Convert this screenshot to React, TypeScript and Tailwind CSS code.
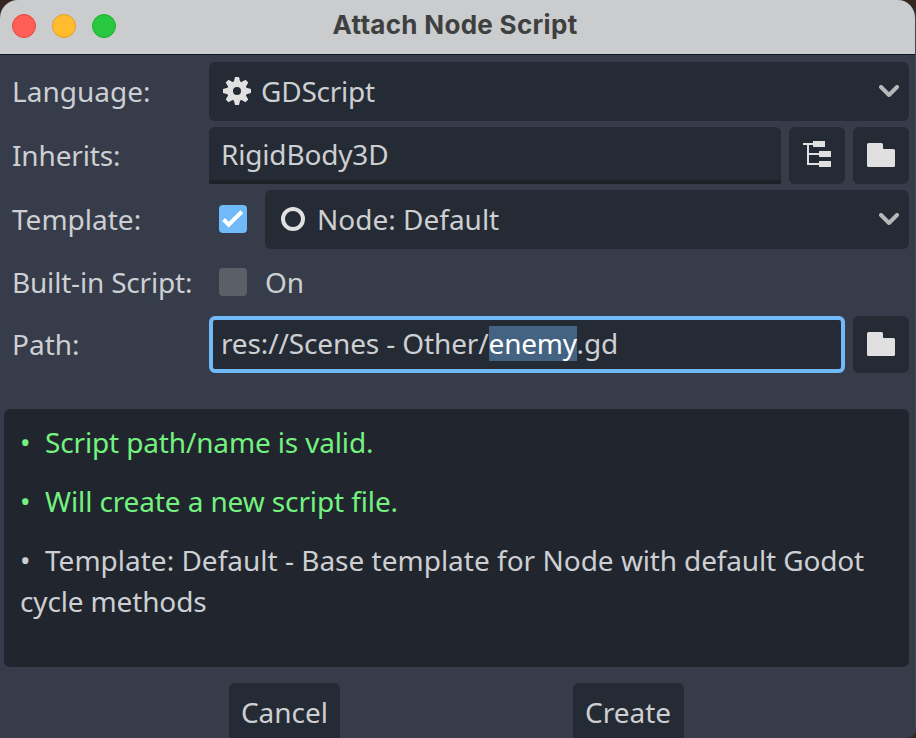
import type { ReactNode } from "react";

const Gear = () => (
  <svg className="size-8 shrink-0" viewBox="0 0 16 16" fill="#e0e0e0">
    <path
      fillRule="evenodd"
      d="M7 1l-.564 2.258a5 5 0 0 0-.689.28L3.758 2.344 2.344 3.758l1.195 1.994a5 5 0 0 0-.285.685L1 7v2l2.258.564a5 5 0 0 0 .279.688l-1.193 1.99 1.414 1.414 1.994-1.195a5 5 0 0 0 .685.285L7 15h2l.564-2.258a5 5 0 0 0 .688-.28l1.99 1.194 1.414-1.414-1.195-1.994a5 5 0 0 0 .285-.685L15 9V7l-2.258-.564a5 5 0 0 0-.28-.688l1.194-1.99-1.414-1.414-1.994 1.195a5 5 0 0 0-.686-.285L9 1zm1 5a2 2 0 0 1 0 4 2 2 0 0 1 0-4z"
    />
  </svg>
);

const Ring = () => (
  <svg className="size-8 shrink-0" viewBox="0 0 32 32" fill="none">
    <circle cx="16" cy="16" r="10" stroke="#e0e0e0" strokeWidth="4" />
  </svg>
);

const Arrow = () => (
  <svg className="ml-auto h-3 w-5 shrink-0" viewBox="0 0 20 12" fill="none">
    <path d="M2 2l8 8 8-8" stroke="#b6b8ba" strokeWidth="4" strokeLinecap="round" strokeLinejoin="round" />
  </svg>
);

const Tree = () => (
  <svg className="size-8" viewBox="0 0 32 32" fill="#e0e0e0" shapeRendering="crispEdges">
    <path d="M2 4h10V2h12v6H12V6H8v8h10v-2h12v6H18v-2H8v8h10v-2h12v6H18v-2H6V6H2z" />
  </svg>
);

const Folder = () => (
  <svg className="size-8" viewBox="0 0 32 32" fill="#e0e0e0">
    <path d="M3.5 4A1.5 1.5 0 0 0 2 5.500v21A1.5 1.5 0 0 0 3.500 28h25a1.500 1.500 0 0 0 1.500-1.500v-15A1.500 1.500 0 0 0 28.500 10H19a1 1 0 0 1-1-1V5.500A1.500 1.500 0 0 0 16.500 4z" />
  </svg>
);

const Row = ({
  label,
  height,
  tracking = "",
  children,
}: {
  label: string;
  height: string;
  tracking?: string;
  children: ReactNode;
}) => (
  <div className={`flex items-center ${height}`}>
    <div className={`w-[197px] shrink-0 pb-[2px] ${tracking}`}>{label}</div>
    {children}
  </div>
);

const Select = ({ icon, children }: { icon: ReactNode; children: ReactNode }) => (
  <div className="flex h-[59px] grow items-center rounded-md bg-[#252b34] pr-[10px] pb-px pl-3">
    {icon}
    <span className="ml-2">{children}</span>
    <Arrow />
  </div>
);

const IconButton = ({ children }: { children: ReactNode }) => (
  <button className="ml-2 flex h-[57px] w-14 shrink-0 items-center justify-center rounded-md bg-[#252b34] pb-px">
    {children}
  </button>
);

const Message = ({ children }: { children: ReactNode }) => (
  <p>
    <span className="inline-block w-[25px]">•</span>
    {children}
  </p>
);

export default function App() {
  return (
    <div className="h-[738px] w-[916px] overflow-hidden bg-[#33271f]">
      <div className="flex h-full flex-col overflow-hidden rounded-t-[18px] rounded-br-[10px] border-r border-[#3c4a55] bg-[#363c4a] font-['Noto_Sans',sans-serif] text-[28px] leading-[38px] whitespace-nowrap text-[#cdcfd2]">
        <header className="grid h-[55px] shrink-0 grid-cols-[1fr_auto_1fr] items-center border-b border-[#131926] bg-[#cbccce] pb-[2px] pl-3">
          <div className="flex gap-4">
            <span className="size-6 rounded-full border border-[#e2463f] bg-[#ff5f57]" />
            <span className="size-6 rounded-full border border-[#e0a023] bg-[#febc2e]" />
            <span className="size-6 rounded-full border border-[#1dad2b] bg-[#28c840]" />
          </div>
          <h1 className="mr-[17px] pb-[2px] font-['Inter',sans-serif] text-[26px] font-bold tracking-[0.3px] text-[#3e403f]">
            Attach Node Script
          </h1>
        </header>

        <main className="flex flex-col gap-[6px] pt-[7px] pr-[6px] pl-3">
          <Row label="Language:" height="h-[59px]">
            <Select icon={<Gear />}>
              <span className="tracking-[-0.22px]">GDScript</span>
            </Select>
          </Row>
          <Row label="Inherits:" height="h-[57px]" tracking="tracking-[-0.15px]">
            <div className="flex h-[57px] grow items-center rounded-t-md border-b-4 border-[#1d2229] bg-[#252b34] pl-3 tracking-[-0.18px]">
              RigidBody3D
            </div>
            <IconButton>
              <Tree />
            </IconButton>
            <IconButton>
              <Folder />
            </IconButton>
          </Row>
          <Row label="Template:" height="h-[59px]">
            <span className="mr-[18px] mb-[2px] ml-[10px] flex size-7 shrink-0 rounded bg-[#70bafa]">
              <svg className="size-7" viewBox="0 0 28 28" fill="none">
                <path d="M4.5 14.5l5.2 5.2L22.8 6.8" stroke="#fff" strokeWidth="4" />
              </svg>
            </span>
            <Select icon={<Ring />}>Node: Default</Select>
          </Row>
          <Row label="Built-in Script:" height="h-[55px]" tracking="tracking-[-0.19px]">
            <span className="mr-[18px] mb-[2px] ml-[10px] size-7 shrink-0 rounded bg-[#5a5f68]" />
            <span className="pb-[2px]">On</span>
          </Row>
          <Row label="Path:" height="h-[57px]">
            <div className="flex h-[57px] grow items-center rounded-md border-4 border-[#70bafa] bg-[#252b34] pb-[2px] pl-2">
              <span className="pb-px tracking-[-0.13px]">res://Scenes - Other/</span>
              <span className="h-[35px] w-[88px] bg-[#446382] leading-[35px] tracking-[-0.2px] text-white">enemy</span>
              <span className="pb-px tracking-[-0.15px]">.gd</span>
            </div>
            <IconButton>
              <Folder />
            </IconButton>
          </Row>
        </main>

        <section className="mt-9 mr-[6px] ml-1 flex h-[258px] shrink-0 flex-col gap-[18px] rounded-md bg-[#21252e] pt-[13px] pl-4 leading-[41px]">
          <div className="flex flex-col gap-[18px] text-[#73f280]">
            <Message>
              <span className="tracking-[-0.15px]">Script path/name is valid.</span>
            </Message>
            <Message>
              <span className="tracking-[-0.12px]">Will create a new script file.</span>
            </Message>
          </div>
          <Message>
            Template: Default - Base template for Node{" "}
            <span className="tracking-[-0.15px]">
              with default Godot
              <br />
              cycle methods
            </span>
          </Message>
        </section>

        <footer className="mt-4 flex gap-[233px] pl-[229px]">
          <button className="h-[59px] w-[111px] shrink-0 rounded-md bg-[#252b34] pb-[2px]">Cancel</button>
          <button className="h-[59px] w-[111px] shrink-0 rounded-md bg-[#252b34] pr-px pb-[2px]">Create</button>
        </footer>
      </div>
    </div>
  );
}
